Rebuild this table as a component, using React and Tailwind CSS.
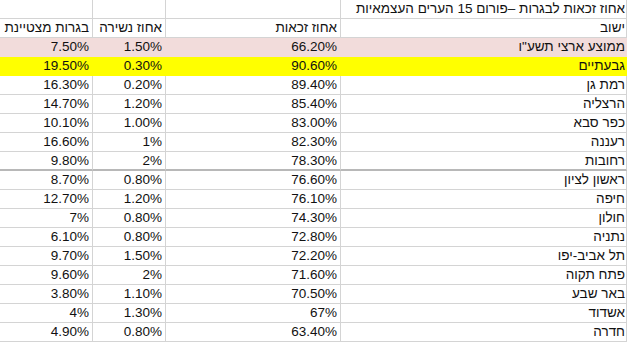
import React from 'react';

const rows = [
  { city: 'ממוצע ארצי תשע"ו', pass: '66.20%', drop: '1.50%', excel: '7.50%', tone: 'pink' },
  { city: 'גבעתיים', pass: '90.60%', drop: '0.30%', excel: '19.50%', tone: 'yellow' },
  { city: 'רמת גן', pass: '89.40%', drop: '0.20%', excel: '16.30%' },
  { city: 'הרצליה', pass: '85.40%', drop: '1.20%', excel: '14.70%' },
  { city: 'כפר סבא', pass: '83.00%', drop: '1.00%', excel: '10.10%' },
  { city: 'רעננה', pass: '82.30%', drop: '1%', excel: '16.60%' },
  { city: 'רחובות', pass: '78.30%', drop: '2%', excel: '9.80%', split: true },
  { city: 'ראשון לציון', pass: '76.60%', drop: '0.80%', excel: '8.70%' },
  { city: 'חיפה', pass: '76.10%', drop: '1.20%', excel: '12.70%' },
  { city: 'חולון', pass: '74.30%', drop: '0.80%', excel: '7%' },
  { city: 'נתניה', pass: '72.80%', drop: '0.80%', excel: '6.10%' },
  { city: 'תל אביב-יפו', pass: '72.20%', drop: '1.50%', excel: '9.70%' },
  { city: 'פתח תקוה', pass: '71.60%', drop: '2%', excel: '9.60%' },
  { city: 'באר שבע', pass: '70.50%', drop: '1.10%', excel: '3.80%' },
  { city: 'אשדוד', pass: '67%', drop: '1.30%', excel: '4%' },
  { city: 'חדרה', pass: '63.40%', drop: '0.80%', excel: '4.90%' },
];

function Cell({ children, tone, first, last, split, num }) {
  const fill =
    tone === 'pink'
      ? 'bg-[#f2dcdb] border-[#f2dcdb]'
      : tone === 'yellow'
      ? 'bg-[#ffff00] border-[#ffff00]'
      : 'bg-white border-[#d4d4d4]';
  return (
    <div
      className={`h-[19px] border-b ${split ? 'border-b-2 border-b-[#b8b8b8]' : ''} ${
        last ? '' : 'border-l'
      } ${first ? 'border-r' : ''} ${fill} flex items-center justify-start overflow-hidden whitespace-nowrap ${
        num ? 'pr-[3px]' : 'pr-[1px]'
      } leading-[18px]`}
    >
      {num ? <span dir="ltr">{children}</span> : children}
    </div>
  );
}

function Row({ cells, tone, split }) {
  return (
    <div className="grid grid-cols-[287px_175px_73px_92px]">
      <Cell tone={tone} first split={split}>{cells[0]}</Cell>
      <Cell tone={tone} split={split} num>{cells[1]}</Cell>
      <Cell tone={tone} split={split} num>{cells[2]}</Cell>
      <Cell tone={tone} split={split} last num>{cells[3]}</Cell>
    </div>
  );
}

export default function App() {
  return (
    <div className="w-[629px] h-[343px] bg-white overflow-hidden">
      <div
        dir="rtl"
        className="w-[627px] text-[13.5px] text-[#111] font-['Liberation_Sans',Arial,sans-serif]"
      >
        <Row cells={['אחוז זכאות לבגרות –פורום 15 הערים העצמאיות', '', '', '']} />
        <Row cells={['ישוב', 'אחוז זכאות', 'אחוז נשירה', 'בגרות מצטיינת']} />
        {rows.map((r) => (
          <Row
            key={r.city}
            tone={r.tone}
            split={r.split}
            cells={[r.city, r.pass, r.drop, r.excel]}
          />
        ))}
      </div>
    </div>
  );
}
